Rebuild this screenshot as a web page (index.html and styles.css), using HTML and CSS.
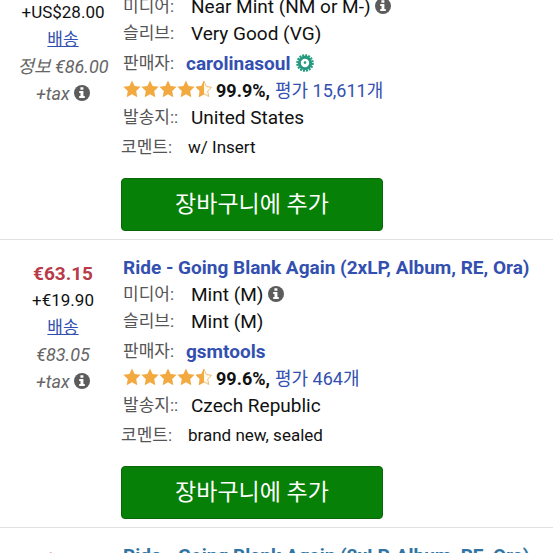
FILE: index.html
```html
<!DOCTYPE html>
<html lang="ko">
<head>
    <meta charset="UTF-8">
    <meta name="viewport" content="width=device-width, initial-scale=1.0">
    <title>Ride - Going Blank Again</title>
    <link rel="stylesheet" href="styles.css">
</head>
<body>

<!-- shared icons -->
<svg class="sprite" aria-hidden="true">
    <symbol id="info" viewBox="0 0 16 16">
        <circle cx="8" cy="8" r="8" fill="#5c5c5c"/>
        <path d="M6.4 2.2h3v2.5h-3zM5.2 6h4.2v5.1h1.4v2H5.2v-2h1.3V8H5.2z" fill="#fff"/>
    </symbol>
    <symbol id="star" viewBox="0 0 18 18">
        <path d="M9 0.4l2.6 5.6 6 0.8-4.4 4.2 1.1 6.2L9 14.2l-5.3 3 1.1-6.2L0.4 6.8l6-0.8z" fill="#f2a93f"/>
    </symbol>
    <symbol id="half-star" viewBox="0 0 18 18">
        <path d="M9 1.2l2.3 5.3 5.4 0.8-4 3.8 1 5.4L9 13.8l-4.7 2.7 1-5.4-4-3.8 5.4-0.8z" fill="#fffaf0" stroke="#edbd76" stroke-width="1"/>
        <path d="M9 0.4v13.8l-5.3 3 1.1-6.2L0.4 6.8l6-0.8z" fill="#f2a93f"/>
    </symbol>
    <symbol id="badge" viewBox="0 0 18 18">
        <circle cx="9" cy="9" r="7.8" fill="none" stroke="#23997f" stroke-width="2" stroke-dasharray="2 1.06"/>
        <circle cx="9" cy="9" r="5.7" fill="#fff" stroke="#23997f" stroke-width="3"/>
        <circle cx="9" cy="8.600" r="1.300" fill="#23997f"/>
    </symbol>
</svg>

<main class="listings">
    <article class="listing listing-first">
        <div class="price">
            <span class="shipping">+US$28.00</span>
            <a href="#">배송</a>
            <span class="total">정보 €86.00</span>
            <span class="total">+tax <svg class="info"><use href="#info"/></svg></span>
        </div>
        <div class="details">
            <p class="row"><span class="label">미디어:</span>Near Mint (NM or M-) <svg class="info"><use href="#info"/></svg></p>
            <p class="row"><span class="label">슬리브:</span>Very Good (VG)</p>
            <p class="row seller"><span class="label">판매자:</span><a href="#">carolinasoul</a><svg class="badge"><use href="#badge"/></svg></p>
            <p class="row rating">
                <span class="stars"><svg><use href="#star"/></svg><svg><use href="#star"/></svg><svg><use href="#star"/></svg><svg><use href="#star"/></svg><svg><use href="#half-star"/></svg></span>
                <strong>99.9%,</strong>
                <a href="#">평가 15,611개</a>
            </p>
            <p class="row"><span class="label">발송지::</span>United States</p>
            <p class="row comment"><span class="label">코멘트:</span>w/ Insert</p>
            <button type="button" class="add-to-cart">장바구니에 추가</button>
        </div>
    </article>

    <article class="listing">
        <div class="price">
            <strong class="amount">€63.15</strong>
            <span class="shipping">+€19.90</span>
            <a href="#">배송</a>
            <span class="total">€83.05</span>
            <span class="total">+tax <svg class="info"><use href="#info"/></svg></span>
        </div>
        <div class="details">
            <h2 class="title"><a href="#">Ride - Going Blank Again (2xLP, Album, RE, Ora)</a></h2>
            <p class="row"><span class="label">미디어:</span>Mint (M) <svg class="info"><use href="#info"/></svg></p>
            <p class="row"><span class="label">슬리브:</span>Mint (M)</p>
            <p class="row seller"><span class="label">판매자:</span><a href="#">gsmtools</a></p>
            <p class="row rating">
                <span class="stars"><svg><use href="#star"/></svg><svg><use href="#star"/></svg><svg><use href="#star"/></svg><svg><use href="#star"/></svg><svg><use href="#half-star"/></svg></span>
                <strong>99.6%,</strong>
                <a href="#">평가 464개</a>
            </p>
            <p class="row"><span class="label">발송지::</span>Czech Republic</p>
            <p class="row comment"><span class="label">코멘트:</span>brand new, sealed</p>
            <button type="button" class="add-to-cart">장바구니에 추가</button>
        </div>
    </article>

    <article class="listing listing-visited">
        <div class="price">
            <strong class="amount">US$65.00</strong>
        </div>
        <div class="details">
            <h2 class="title"><a href="#">Ride - Going Blank Again (2xLP, Album, RE, Ora)</a></h2>
        </div>
    </article>
</main>

</body>
</html>
```
FILE: styles.css
```css
* {
    box-sizing: border-box;
}
body {
    margin: 0;
    height: 100vh;
    overflow: hidden;
    background: #fff;
    color: #111;
    font-family: Roboto, "Noto Sans CJK KR", sans-serif;
    font-size: 19px;
    line-height: 27px;
}
a {
    color: #3350b0;
    text-decoration: none;
}
.sprite {
    display: none;
}
/* the list is scrolled part of the way into the first listing */
.listings {
    margin-top: -6px;
}
.listing {
    display: grid;
    grid-template-columns: 121px 1fr;
    border-bottom: 1px solid #dfe3e3;
}
.price {
    display: flex;
    flex-direction: column;
    align-items: center;
    padding: 20px 0 0 5px;
    white-space: nowrap;
}
.price a {
    text-decoration: underline;
    font-size: 17px;
}
.amount {
    color: #b93a48;
}
.shipping {
    font-size: 17px;
}
.total {
    color: #666;
    font-size: 18px;
    font-style: italic;
}
.info {
    width: 16px;
    height: 16px;
    vertical-align: -1px;
}
.details {
    padding: 14px 0 8px;
}
.listing-first .price {
    padding-top: 5px;
}
.listing-first .details {
    padding-top: 0;
}
.title {
    margin: 0;
    padding-left: 2px;
    font-size: 19px;
    line-height: 28px;
    white-space: nowrap;
}
.listing-visited .title a {
    color: #2f74a3;
}
.row {
    display: flex;
    align-items: center;
    height: 27px;
    margin: 0;
    padding: 0 0 2px 2px;
    white-space: pre;
}
.row .info {
    margin-bottom: 2px;
}
.label {
    width: 68px;
    color: #555;
    font-size: 17px;
}
.seller {
    height: 30px;
    padding-bottom: 0;
}
.seller .label {
    width: 63px;
}
.seller a {
    font-weight: bold;
}
.badge {
    width: 18px;
    height: 18px;
    margin-left: 5px;
}
.rating {
    font-size: 18px;
}
.stars {
    display: flex;
    margin: 0 3px 4px 0;
}
.stars svg {
    width: 18px;
    height: 18px;
}
.rating strong {
    margin-right: 5px;
}
.comment {
    height: 30px;
    padding: 0;
    font-size: 17px;
}
.comment .label {
    width: 67px;
}
.add-to-cart {
    display: block;
    width: 262px;
    height: 53px;
    margin-top: 16px;
    padding: 0 0 6px;
    border: 1px solid #0b650b;
    border-radius: 4px;
    background: #068006;
    color: #fff;
    font-family: inherit;
    font-size: 23px;
    cursor: pointer;
}
```
